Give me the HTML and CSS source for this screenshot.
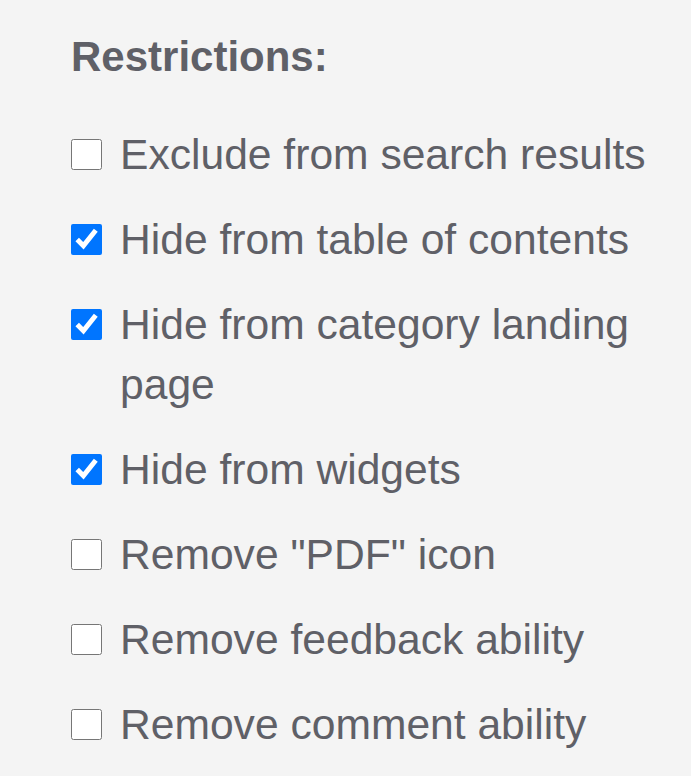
FILE: index.html
```html
<!DOCTYPE html>
<html lang="en">
<head>
  <meta charset="UTF-8" />
  <meta name="viewport" content="width=device-width, initial-scale=1.0"/>
  <title>Restrictions</title>
  <link rel="stylesheet" href="styles.css">
</head>
<body>
  <div class="restrictions">
    <h2>Restrictions:</h2>

    <label class="option">
      <input type="checkbox" />
      <span>Exclude from search results</span>
    </label>
    <label class="option">
      <input type="checkbox" checked />
      <span>Hide from table of contents</span>
    </label>
    <label class="option">
      <input type="checkbox" checked />
      <span>Hide from category landing page</span>
    </label>
    <label class="option">
      <input type="checkbox" checked />
      <span>Hide from widgets</span>
    </label>
    <label class="option">
      <input type="checkbox" />
      <span>Remove "PDF" icon</span>
    </label>
    <label class="option">
      <input type="checkbox" />
      <span>Remove feedback ability</span>
    </label>
    <label class="option">
      <input type="checkbox" />
      <span>Remove comment ability</span>
    </label>
  </div>
</body>
</html>
```

FILE: styles.css
```css
body {
  font-family: "Liberation Sans", Arial, sans-serif;
  margin: 0;
  padding: 0;
  background-color: #f4f4f4;
  color: #5f6067;
}
.restrictions {
  padding: 33px 40px 0 71px;
}
h2 {
  margin: 0 0 43px 0;
  font-size: 42px;
  line-height: 48px;
  font-weight: bold;
}
.option {
  display: flex;
  align-items: flex-start;
  gap: 18px;
  font-size: 42.6px;
  line-height: 60px;
  margin-bottom: 25px;
  cursor: pointer;
}
.option input {
  flex-shrink: 0;
  width: 31px;
  height: 31px;
  margin: 15px 0 0 0;
  accent-color: #0075ff;
}
```
